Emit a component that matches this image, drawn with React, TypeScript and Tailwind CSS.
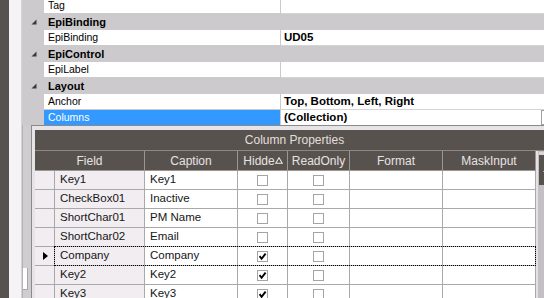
import React from "react";

const FONT = { fontFamily: '"Liberation Sans", Arial, sans-serif' };

function CatArrow() {
  return (
    <svg width="6" height="6" viewBox="0 0 6 6" className="ml-[9px] shrink-0">
      <path d="M5.5 0.5 L5.5 5.5 L0.5 5.5 Z" fill="#3a3a3a" />
    </svg>
  );
}

function Category({ label }: { label: string }) {
  return (
    <div className="flex items-center h-[16px] bg-[#cccacc]">
      <div className="w-[22px] flex items-center">
        <CatArrow />
      </div>
      <span className="pl-[4px] text-[11px] font-bold text-black leading-none">{label}</span>
    </div>
  );
}

function Item({ label, value, selected }: { label: string; value?: string; selected?: boolean }) {
  return (
    <div className={`flex ${selected ? "h-[15px]" : "h-[16px]"}`}>
      <div className="w-[22px] shrink-0 bg-[#cccacc]" />
      <div
        className={`w-[237px] shrink-0 flex items-center pl-[4px] text-[10.5px] border-r border-[#cccacc] ${
          selected ? "bg-[#3399ff] text-white" : "bg-white text-black border-b"
        }`}
      >
        {label}
      </div>
      <div
        className={`flex-1 flex items-center pl-[3px] bg-white text-[11.5px] font-bold text-black ${
          selected ? "" : "border-b border-[#d4d4d4]"
        }`}
      >
        <span>{value}</span>
        {selected && <div className="ml-auto mr-[-12px] w-[15px] h-[15px] border border-[#a0a0a0] bg-white" />}
      </div>
    </div>
  );
}

function Check({ on }: { on?: boolean }) {
  return (
    <div className="w-[11px] h-[11px] border border-[#a4a4a4] bg-white flex items-center justify-center">
      {on && (
        <svg width="9" height="9" viewBox="0 0 9 9">
          <path d="M1.6 4.2 L3.6 6.8 L7.6 1.6" fill="none" stroke="#000" strokeWidth="1.9" />
        </svg>
      )}
    </div>
  );
}

const rows = [
  { field: "Key1", caption: "Key1", hidden: false },
  { field: "CheckBox01", caption: "Inactive", hidden: false },
  { field: "ShortChar01", caption: "PM Name", hidden: false },
  { field: "ShortChar02", caption: "Email", hidden: false },
  { field: "Company", caption: "Company", hidden: true, current: true },
  { field: "Key2", caption: "Key2", hidden: true },
  { field: "Key3", caption: "Key3", hidden: true },
  { field: "Key4", caption: "Key4", hidden: true },
];

const head = "h-[20px] flex items-center justify-center border-r border-b border-[#9c9692] text-[12px] text-[#e6e3e3]";
const cell = "h-[19px] border-r border-b border-[#a9a9a9] flex items-center";

export default function App() {
  return (
    <div className="w-[544px] h-[298px] overflow-hidden flex bg-[#f4f2f4]" style={FONT}>
      <div className="w-[9px] shrink-0 bg-[#57524f]" />
      <div className="w-[13px] shrink-0 bg-[#f5f3f5] border-r border-[#d6d4d6]" />

      <div className="flex-1 min-w-0 flex flex-col">
        {/* property grid */}
        <div className="-mt-[2px] flex flex-col">
          <Item label="Tag" />
          <Category label="EpiBinding" />
          <Item label="EpiBinding" value="UD05" />
          <Category label="EpiControl" />
          <Item label="EpiLabel" />
          <Category label="Layout" />
          <Item label="Anchor" value="Top, Bottom, Left, Right" />
          <Item label="Columns" value="(Collection)" selected />
        </div>

        <div className="flex flex-1 min-h-0">
          {/* strip behind the popup */}
          <div className="w-[9px] shrink-0 bg-[#cfcdcf] flex flex-col border-l border-[#b4b2b4]">
            <div className="flex-1" />
            <div className="h-[22px] mb-[8px] mr-[3px] bg-white border-r border-b border-[#a8a8a8]" />
          </div>

          {/* Column Properties popup */}
          <div className="flex-1 border-t border-l border-[#8a8a8a] bg-[#e6e4e6] pt-[4px] pl-[3px] overflow-visible">
            <div className="w-[519px]">
              <div className="h-[21px] bg-[#58524e] border-b border-[#8e8884] flex items-center justify-center text-[12px] text-[#e2dfdf]">
                Column Properties
              </div>
              <div className="flex">
                <div className="relative w-[501px] bg-white">
                  <div className="grid grid-cols-[20px_90px_93px_50px_62px_93px_93px] bg-[#58524e]">
                    <div className={`${head} col-span-2`}>Field</div>
                    <div className={head}>Caption</div>
                    <div className={`${head} justify-between pl-[4px] pr-[3px]`}>
                      <span>Hidde</span>
                      <svg width="8" height="7" viewBox="0 0 8 7">
                        <path d="M4 0.8 L7.3 6.3 L0.7 6.3 Z" fill="none" stroke="#eeeeee" strokeWidth="1.1" />
                      </svg>
                    </div>
                    <div className={head}>ReadOnly</div>
                    <div className={head}>Format</div>
                    <div className={head}>MaskInput</div>
                  </div>

                  <div className="relative grid grid-cols-[20px_90px_93px_50px_62px_93px_93px] text-[11.5px] text-[#161616]">
                    {rows.map((r) => (
                      <React.Fragment key={r.field}>
                        <div className={`${cell} bg-[#f1edf1] pl-[8px]`}>
                          {r.current && (
                            <svg width="5" height="8" viewBox="0 0 5 8">
                              <path d="M0 0 L5 4 L0 8 Z" fill="#000" />
                            </svg>
                          )}
                        </div>
                        <div className={`${cell} bg-[#f1edf1] pl-[5px]`}>{r.field}</div>
                        <div className={`${cell} pl-[5px]`}>{r.caption}</div>
                        <div className={`${cell} justify-center`}>
                          <Check on={r.hidden} />
                        </div>
                        <div className={`${cell} justify-center`}>
                          <Check />
                        </div>
                        <div className={cell} />
                        <div className={cell} />
                      </React.Fragment>
                    ))}
                    {/* focus rectangle on current row */}
                    <div className="absolute left-[19px] top-[75px] w-[482px] h-[20px] border border-dotted border-black pointer-events-none" />
                  </div>
                </div>

                {/* vertical scrollbar */}
                <div className="w-[18px] bg-[#c2c0c2] border-l-[2px] border-[#e4e2e4] flex flex-col">
                  <div className="h-[33px] mt-[1px] ml-[1px] bg-[#58524e] border-t-[3px] border-[#d8d6d8] flex items-center justify-center">
                    <svg width="7" height="4" viewBox="0 0 7 4">
                      <path d="M0 4 L3.5 0 L7 4 Z" fill="#f0f0f0" />
                    </svg>
                  </div>
                </div>
              </div>
            </div>
          </div>
        </div>
      </div>
    </div>
  );
}
